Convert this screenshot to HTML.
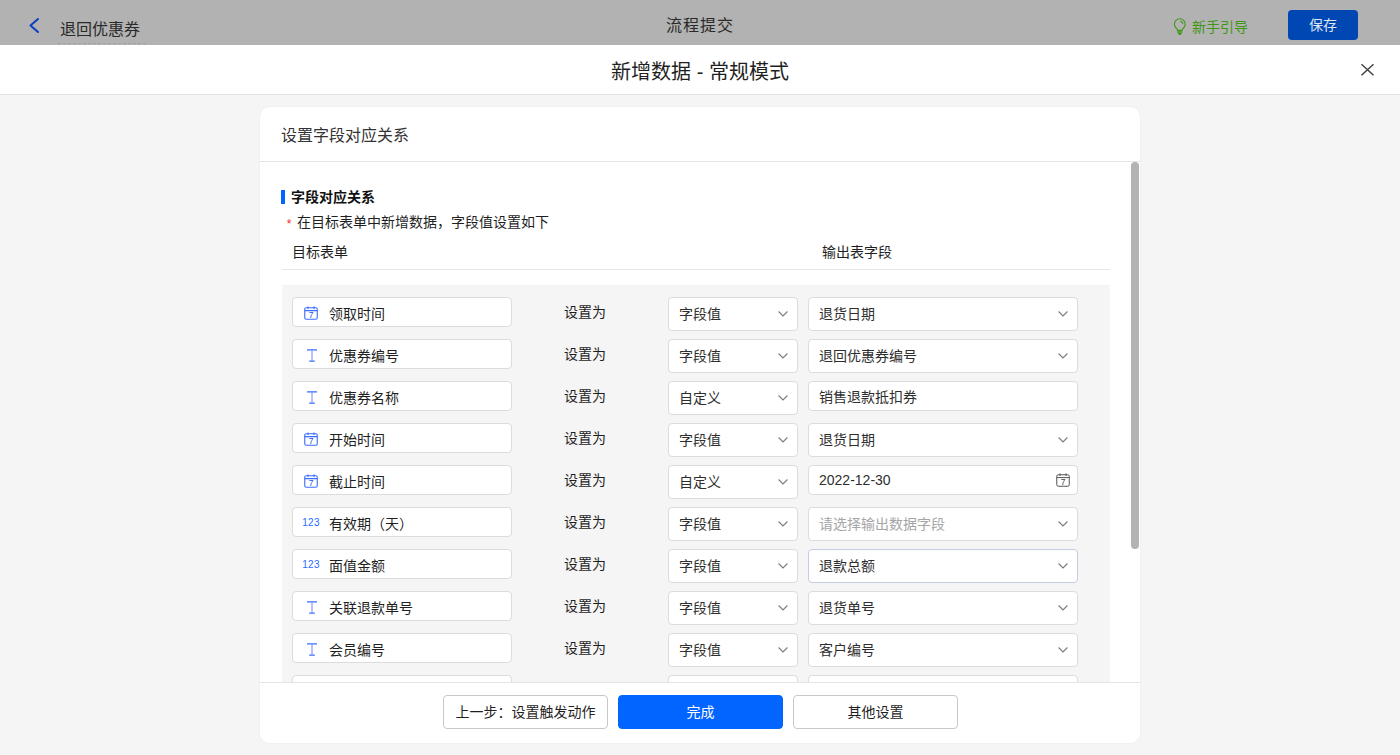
<!DOCTYPE html>
<html lang="zh-CN">
<head>
<meta charset="utf-8">
<title>新增数据 - 常规模式</title>
<style>
*{box-sizing:border-box;margin:0;padding:0}
html,body{width:1400px;height:755px;overflow:hidden;background:#f5f5f5}
body{font-family:"Liberation Sans","Noto Sans CJK SC",sans-serif;font-size:14px;color:#1f1f1f;position:relative}
.abs{position:absolute}
#topbar{left:0;top:0;width:1400px;height:45px;background:#b2b2b2}
#back{left:28px;top:17px;width:12px;height:17px}
#appname{left:60px;top:20px;font-size:16px;line-height:20px;color:#2a2a2a;white-space:nowrap}
#appline{left:58px;top:43px;width:88px;height:0;border-top:1px dashed #a3a3a3}
#flow{left:0;top:16px;width:1400px;text-align:center;letter-spacing:1px;font-size:16px;line-height:20px;color:#2a2a2a}
#guide{left:1192px;top:17.500px;font-size:14px;line-height:18px;color:#3f9714;white-space:nowrap}
#bulb{left:1173px;top:18px;width:14px;height:18px}
#save{left:1288px;top:10px;width:70px;height:30px;border-radius:4px;background:#0047b3;color:#dfe6f2;font-size:14px;line-height:30px;text-align:center}
#mhead{left:0;top:45px;width:1400px;height:50px;background:#fff;border-bottom:1px solid #e0e0e0}
#mtitle{left:0;top:58px;width:1400px;text-align:center;font-size:20px;line-height:28px;color:#1f1f1f}
#close{left:1360px;top:62px;width:15px;height:15px}
#card{left:260px;top:107px;width:880px;height:636px;background:#fff;border-radius:10px;overflow:hidden;box-shadow:0 0 3px rgba(0,0,0,.05)}
#chead{left:0;top:0;width:880px;height:55px;border-bottom:1px solid #e4e4e4}
#ctitle{left:21px;top:19px;font-size:16px;line-height:20px;color:#333}
#scroll{left:871px;top:55px;width:8px;height:387px;background:#b3b3b3;border-radius:4px}
#sbar{left:21px;top:83px;width:4px;height:14px;background:#0265ff}
#stitle{left:31px;top:80px;font-size:14px;font-weight:bold;line-height:20px;color:#111}
#star{left:26.700px;top:107px;font-size:12px;line-height:20px;color:#f5222d}
#sdesc{left:37px;top:105px;font-size:14px;line-height:20px;color:#1f1f1f}
#h1{left:32px;top:135px;font-size:14px;line-height:20px}
#h2{left:562px;top:135px;font-size:14px;line-height:20px}
#hline{left:22px;top:162px;width:828px;height:1px;background:#e6e6e6}
#rows{left:22px;top:178px;width:828px;height:400px;background:#f5f5f5}
.row{position:absolute;left:0;width:828px;height:42px}
.fld{position:absolute;left:10px;top:12px;width:220px;height:30px;background:#fff;border:1px solid #dcdcdc;border-radius:4px}
.fld .tx{position:absolute;left:36px;top:5.500px;font-size:14px;line-height:20px;white-space:nowrap}
.fld svg{position:absolute}
.n123{position:absolute;left:9.200px;top:9px;font-size:10px;line-height:12px;color:#2a6bff;letter-spacing:.3px}
.setas{position:absolute;left:282px;top:17px;font-size:14px;line-height:20px}
.sel{position:absolute;top:12px;height:34px;background:#fff;border:1px solid #dcdcdc;border-radius:4px}
.s1{left:386px;width:130px}
.s2{left:526px;width:270px}
.sel .tx{position:absolute;left:10px;top:6px;font-size:14px;line-height:20px;white-space:nowrap;color:#2e2e2e}
.sel .ph{color:#a6a6a6}
.sel.hov{border-color:#c4cce0}
.sel .chev{position:absolute;right:9.500px;top:12px;width:10px;height:8px}
.inp{height:30px}
.inp .tx{top:5px}
.inp .dt{top:4px}
#foot{left:0;top:575px;width:880px;height:61px;background:#fff;border-top:1px solid #e4e4e4}
.btn{position:absolute;top:12px;width:165px;height:34px;border:1px solid #c8c8c8;border-radius:4px;background:#fff;font-size:14px;line-height:32px;text-align:center;color:#1f1f1f}
#b1{left:183px}
#b2{left:358px;background:#0265ff;border-color:#0265ff;color:#fff}
#b3{left:533px}
</style>
</head>
<body>
<div id="topbar" class="abs"></div>
<svg id="back" class="abs" viewBox="0 0 12 17"><path d="M10 2 L2.500 8.500 L10 15" fill="none" stroke="#0a3fc4" stroke-width="2" stroke-linecap="round" stroke-linejoin="round"/></svg>
<div id="appname" class="abs">退回优惠券</div>
<div id="appline" class="abs"></div>
<div id="flow" class="abs">流程提交</div>
<svg id="bulb" class="abs" viewBox="0 0 14 18"><path d="M4.600 12.400 C4.600 10.800 1.400 9.600 1.400 6.200 A5.400 5.400 0 0 1 12.200 6.200 C12.200 9.600 9 10.800 9 12.400 Z M4.600 13.900h4.400 M5.200 15.200h3.200 M6.100 16.400h1.400 M7.600 3.200 A3 3 0 0 1 9.800 5.600" fill="none" stroke="#3f9714" stroke-width="1.100" stroke-linecap="round" stroke-linejoin="round"/></svg>
<div id="guide" class="abs">新手引导</div>
<div id="save" class="abs">保存</div>
<div id="mhead" class="abs"></div>
<div id="mtitle" class="abs">新增数据 - 常规模式</div>
<svg id="close" class="abs" viewBox="0 0 15 15"><path d="M1.500 2.300 L13.500 13.300 M13.500 2.300 L1.500 13.300" fill="none" stroke="#444" stroke-width="1.500"/></svg>

<div id="card" class="abs">
  <div id="chead" class="abs"></div>
  <div id="ctitle" class="abs">设置字段对应关系</div>
  <div id="sbar" class="abs"></div>
  <div id="stitle" class="abs">字段对应关系</div>
  <div id="star" class="abs">*</div>
  <div id="sdesc" class="abs">在目标表单中新增数据，字段值设置如下</div>
  <div id="h1" class="abs">目标表单</div>
  <div id="h2" class="abs">输出表字段</div>
  <div id="hline" class="abs"></div>
  <div id="rows" class="abs">
    <div class="row" style="top:0px"><div class="fld"><svg style="left:11px;top:8px" width="14" height="14" viewBox="0 0 14 14"><rect x="0.750" y="1.750" width="12.500" height="11.500" rx="1.500" fill="none" stroke="#3b6cff" stroke-width="1.100"/><path d="M0.750 4.600h12.500M4 0.400v2.600M10 0.400v2.600" stroke="#3b6cff" stroke-width="1.100" fill="none"/><text x="7" y="12" font-size="8.500" text-anchor="middle" fill="#2456e6" font-family="Liberation Sans,sans-serif">7</text></svg><span class="tx">领取时间</span></div><span class="setas">设置为</span><div class="sel s1"><span class="tx">字段值</span><svg class="chev" viewBox="0 0 10 8"><path d="M0.600 1.500 L5 6 L9.400 1.500" fill="none" stroke="#7a7a7a" stroke-width="1.100"/></svg></div><div class="sel s2"><span class="tx">退货日期</span><svg class="chev" viewBox="0 0 10 8"><path d="M0.600 1.500 L5 6 L9.400 1.500" fill="none" stroke="#7a7a7a" stroke-width="1.100"/></svg></div></div>
    <div class="row" style="top:42px"><div class="fld"><svg style="left:14px;top:9px" width="10" height="13" viewBox="0 0 10 13"><path d="M0 0.800h10M2.200 12.200h5.600" stroke="#3b6cff" stroke-width="1.200" fill="none"/><path d="M5 0.800v11.400" stroke="#6d86ff" stroke-width="1" fill="none"/></svg><span class="tx">优惠券编号</span></div><span class="setas">设置为</span><div class="sel s1"><span class="tx">字段值</span><svg class="chev" viewBox="0 0 10 8"><path d="M0.600 1.500 L5 6 L9.400 1.500" fill="none" stroke="#7a7a7a" stroke-width="1.100"/></svg></div><div class="sel s2"><span class="tx">退回优惠券编号</span><svg class="chev" viewBox="0 0 10 8"><path d="M0.600 1.500 L5 6 L9.400 1.500" fill="none" stroke="#7a7a7a" stroke-width="1.100"/></svg></div></div>
    <div class="row" style="top:84px"><div class="fld"><svg style="left:14px;top:9px" width="10" height="13" viewBox="0 0 10 13"><path d="M0 0.800h10M2.200 12.200h5.600" stroke="#3b6cff" stroke-width="1.200" fill="none"/><path d="M5 0.800v11.400" stroke="#6d86ff" stroke-width="1" fill="none"/></svg><span class="tx">优惠券名称</span></div><span class="setas">设置为</span><div class="sel s1"><span class="tx">自定义</span><svg class="chev" viewBox="0 0 10 8"><path d="M0.600 1.500 L5 6 L9.400 1.500" fill="none" stroke="#7a7a7a" stroke-width="1.100"/></svg></div><div class="sel s2 inp"><span class="tx">销售退款抵扣券</span></div></div>
    <div class="row" style="top:126px"><div class="fld"><svg style="left:11px;top:8px" width="14" height="14" viewBox="0 0 14 14"><rect x="0.750" y="1.750" width="12.500" height="11.500" rx="1.500" fill="none" stroke="#3b6cff" stroke-width="1.100"/><path d="M0.750 4.600h12.500M4 0.400v2.600M10 0.400v2.600" stroke="#3b6cff" stroke-width="1.100" fill="none"/><text x="7" y="12" font-size="8.500" text-anchor="middle" fill="#2456e6" font-family="Liberation Sans,sans-serif">7</text></svg><span class="tx">开始时间</span></div><span class="setas">设置为</span><div class="sel s1"><span class="tx">字段值</span><svg class="chev" viewBox="0 0 10 8"><path d="M0.600 1.500 L5 6 L9.400 1.500" fill="none" stroke="#7a7a7a" stroke-width="1.100"/></svg></div><div class="sel s2"><span class="tx">退货日期</span><svg class="chev" viewBox="0 0 10 8"><path d="M0.600 1.500 L5 6 L9.400 1.500" fill="none" stroke="#7a7a7a" stroke-width="1.100"/></svg></div></div>
    <div class="row" style="top:168px"><div class="fld"><svg style="left:11px;top:8px" width="14" height="14" viewBox="0 0 14 14"><rect x="0.750" y="1.750" width="12.500" height="11.500" rx="1.500" fill="none" stroke="#3b6cff" stroke-width="1.100"/><path d="M0.750 4.600h12.500M4 0.400v2.600M10 0.400v2.600" stroke="#3b6cff" stroke-width="1.100" fill="none"/><text x="7" y="12" font-size="8.500" text-anchor="middle" fill="#2456e6" font-family="Liberation Sans,sans-serif">7</text></svg><span class="tx">截止时间</span></div><span class="setas">设置为</span><div class="sel s1"><span class="tx">自定义</span><svg class="chev" viewBox="0 0 10 8"><path d="M0.600 1.500 L5 6 L9.400 1.500" fill="none" stroke="#7a7a7a" stroke-width="1.100"/></svg></div><div class="sel s2 inp"><span class="tx dt">2022-12-30</span><svg style="right:7px;top:7px;position:absolute" width="14" height="14" viewBox="0 0 14 14"><rect x="0.750" y="1.750" width="12.500" height="11.500" rx="1.500" fill="none" stroke="#555" stroke-width="1"/><path d="M0.750 4.600h12.500M4 0.400v2.600M10 0.400v2.600" stroke="#555" stroke-width="1" fill="none"/><text x="7" y="12" font-size="8.500" text-anchor="middle" fill="#444" font-family="Liberation Sans,sans-serif">7</text></svg></div></div>
    <div class="row" style="top:210px"><div class="fld"><span class="n123">123</span><span class="tx">有效期（天）</span></div><span class="setas">设置为</span><div class="sel s1"><span class="tx">字段值</span><svg class="chev" viewBox="0 0 10 8"><path d="M0.600 1.500 L5 6 L9.400 1.500" fill="none" stroke="#7a7a7a" stroke-width="1.100"/></svg></div><div class="sel s2"><span class="tx ph">请选择输出数据字段</span><svg class="chev" viewBox="0 0 10 8"><path d="M0.600 1.500 L5 6 L9.400 1.500" fill="none" stroke="#7a7a7a" stroke-width="1.100"/></svg></div></div>
    <div class="row" style="top:252px"><div class="fld"><span class="n123">123</span><span class="tx">面值金额</span></div><span class="setas">设置为</span><div class="sel s1"><span class="tx">字段值</span><svg class="chev" viewBox="0 0 10 8"><path d="M0.600 1.500 L5 6 L9.400 1.500" fill="none" stroke="#7a7a7a" stroke-width="1.100"/></svg></div><div class="sel s2 hov"><span class="tx">退款总额</span><svg class="chev" viewBox="0 0 10 8"><path d="M0.600 1.500 L5 6 L9.400 1.500" fill="none" stroke="#7a7a7a" stroke-width="1.100"/></svg></div></div>
    <div class="row" style="top:294px"><div class="fld"><svg style="left:14px;top:9px" width="10" height="13" viewBox="0 0 10 13"><path d="M0 0.800h10M2.200 12.200h5.600" stroke="#3b6cff" stroke-width="1.200" fill="none"/><path d="M5 0.800v11.400" stroke="#6d86ff" stroke-width="1" fill="none"/></svg><span class="tx">关联退款单号</span></div><span class="setas">设置为</span><div class="sel s1"><span class="tx">字段值</span><svg class="chev" viewBox="0 0 10 8"><path d="M0.600 1.500 L5 6 L9.400 1.500" fill="none" stroke="#7a7a7a" stroke-width="1.100"/></svg></div><div class="sel s2"><span class="tx">退货单号</span><svg class="chev" viewBox="0 0 10 8"><path d="M0.600 1.500 L5 6 L9.400 1.500" fill="none" stroke="#7a7a7a" stroke-width="1.100"/></svg></div></div>
    <div class="row" style="top:336px"><div class="fld"><svg style="left:14px;top:9px" width="10" height="13" viewBox="0 0 10 13"><path d="M0 0.800h10M2.200 12.200h5.600" stroke="#3b6cff" stroke-width="1.200" fill="none"/><path d="M5 0.800v11.400" stroke="#6d86ff" stroke-width="1" fill="none"/></svg><span class="tx">会员编号</span></div><span class="setas">设置为</span><div class="sel s1"><span class="tx">字段值</span><svg class="chev" viewBox="0 0 10 8"><path d="M0.600 1.500 L5 6 L9.400 1.500" fill="none" stroke="#7a7a7a" stroke-width="1.100"/></svg></div><div class="sel s2"><span class="tx">客户编号</span><svg class="chev" viewBox="0 0 10 8"><path d="M0.600 1.500 L5 6 L9.400 1.500" fill="none" stroke="#7a7a7a" stroke-width="1.100"/></svg></div></div>
    <div class="row" style="top:378px"><div class="fld"><svg style="left:14px;top:9px" width="10" height="13" viewBox="0 0 10 13"><path d="M0 0.800h10M2.200 12.200h5.600" stroke="#3b6cff" stroke-width="1.200" fill="none"/><path d="M5 0.800v11.400" stroke="#6d86ff" stroke-width="1" fill="none"/></svg><span class="tx">会员名称</span></div><span class="setas">设置为</span><div class="sel s1"><span class="tx">字段值</span><svg class="chev" viewBox="0 0 10 8"><path d="M0.600 1.500 L5 6 L9.400 1.500" fill="none" stroke="#7a7a7a" stroke-width="1.100"/></svg></div><div class="sel s2"><span class="tx">客户名称</span><svg class="chev" viewBox="0 0 10 8"><path d="M0.600 1.500 L5 6 L9.400 1.500" fill="none" stroke="#7a7a7a" stroke-width="1.100"/></svg></div></div>
  </div>
  <div id="scroll" class="abs"></div>
  <div id="foot" class="abs">
    <div id="b1" class="btn">上一步：设置触发动作</div>
    <div id="b2" class="btn">完成</div>
    <div id="b3" class="btn">其他设置</div>
  </div>
</div>
</body>
</html>
